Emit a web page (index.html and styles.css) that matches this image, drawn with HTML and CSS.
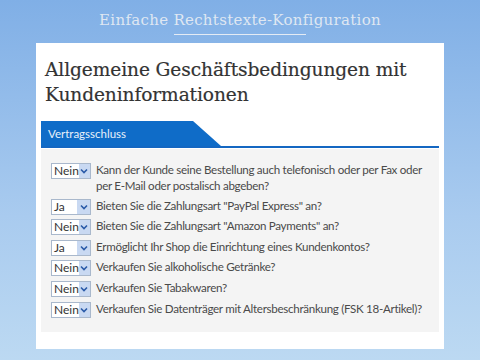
FILE: index.html
```html
<!DOCTYPE html>
<html lang="de">
<head>
<meta charset="utf-8">
<title>Einfache Rechtstexte-Konfiguration</title>
<link rel="stylesheet" href="styles.css">
</head>
<body>
<header class="top">
  <h1 class="site-title">Einfache Rechtstexte-Konfiguration</h1>
</header>
<main class="card">
  <h2 class="heading">Allgemeine Geschäftsbedingungen mit Kundeninformationen</h2>
  <div class="tabbar"><div class="tab">Vertragsschluss</div></div>
  <div class="panel">
    <div class="row"><span class="sel"><span class="val">Nein</span><span class="btn"><svg width="8" height="6" viewBox="0 0 8 6"><path d="M1 1.5 L4 4.5 L7 1.5" fill="none" stroke="#2a5aa8" stroke-width="1.6"/></svg></span></span><span class="q">Kann der Kunde seine Bestellung auch telefonisch oder per Fax oder per E-Mail oder postalisch abgeben?</span></div>
    <div class="row"><span class="sel"><span class="val">Ja</span><span class="btn"><svg width="8" height="6" viewBox="0 0 8 6"><path d="M1 1.5 L4 4.5 L7 1.5" fill="none" stroke="#2a5aa8" stroke-width="1.6"/></svg></span></span><span class="q">Bieten Sie die Zahlungsart "PayPal Express" an?</span></div>
    <div class="row"><span class="sel"><span class="val">Nein</span><span class="btn"><svg width="8" height="6" viewBox="0 0 8 6"><path d="M1 1.5 L4 4.5 L7 1.5" fill="none" stroke="#2a5aa8" stroke-width="1.6"/></svg></span></span><span class="q">Bieten Sie die Zahlungsart "Amazon Payments" an?</span></div>
    <div class="row"><span class="sel"><span class="val">Ja</span><span class="btn"><svg width="8" height="6" viewBox="0 0 8 6"><path d="M1 1.5 L4 4.5 L7 1.5" fill="none" stroke="#2a5aa8" stroke-width="1.6"/></svg></span></span><span class="q">Ermöglicht Ihr Shop die Einrichtung eines Kundenkontos?</span></div>
    <div class="row"><span class="sel"><span class="val">Nein</span><span class="btn"><svg width="8" height="6" viewBox="0 0 8 6"><path d="M1 1.5 L4 4.5 L7 1.5" fill="none" stroke="#2a5aa8" stroke-width="1.6"/></svg></span></span><span class="q">Verkaufen Sie alkoholische Getränke?</span></div>
    <div class="row"><span class="sel"><span class="val">Nein</span><span class="btn"><svg width="8" height="6" viewBox="0 0 8 6"><path d="M1 1.5 L4 4.5 L7 1.5" fill="none" stroke="#2a5aa8" stroke-width="1.6"/></svg></span></span><span class="q">Verkaufen Sie Tabakwaren?</span></div>
    <div class="row"><span class="sel"><span class="val">Nein</span><span class="btn"><svg width="8" height="6" viewBox="0 0 8 6"><path d="M1 1.5 L4 4.5 L7 1.5" fill="none" stroke="#2a5aa8" stroke-width="1.6"/></svg></span></span><span class="q">Verkaufen Sie Datenträger mit Altersbeschränkung (FSK 18-Artikel)?</span></div>
  </div>
</main>
</body>
</html>
```
FILE: styles.css
```css
html, body {
  margin: 0;
  padding: 0;
}
body {
  width: 480px;
  height: 360px;
  overflow: hidden;
  background: linear-gradient(to bottom, #80afe6 0%, #a9cbef 60%, #bcd9f2 100%);
  font-family: Lato, sans-serif;
}
.top {
  height: 43px;
  display: flex;
  justify-content: center;
}
.site-title {
  margin: 9px 0 0 0;
  height: 25px;
  font-family: "DejaVu Serif", serif;
  font-weight: normal;
  font-size: 15px;
  letter-spacing: 0.3px;
  color: #dfe7f2;
  line-height: 22px;
  position: relative;
}
.site-title::after {
  content: "";
  position: absolute;
  left: 75px;
  width: 132px;
  top: 25px;
  height: 1px;
  background: #e4ebf4;
}
.card {
  margin: 0 36px;
  height: 306px;
  background: #fff;
  padding: 14px 5px 0 5px;
  box-sizing: border-box;
}
.heading {
  margin: 0 0 0 4px;
  font-family: "DejaVu Serif", serif;
  font-weight: normal;
  font-size: 18.6px;
  line-height: 25px;
  color: #333;
  letter-spacing: -0.1px;
  -webkit-text-stroke: 0.2px #333;
}
.tabbar {
  margin-top: 14px;
  border-bottom: 2px solid #1467c2;
  height: 25px;
}
.tab {
  width: 180px;
  height: 25px;
  background: #0f6cc8;
  clip-path: polygon(0 0, 152px 0, 180px 100%, 0 100%);
  color: #e8f0fa;
  font-size: 11.5px;
  line-height: 25px;
  padding-left: 7px;
  box-sizing: border-box;
}
.panel {
  background: #f4f4f4;
  height: 183px;
  margin-top: 1px;
  padding: 13px 4px 0 10px;
  box-sizing: border-box;
  display: flex;
  flex-direction: column;
  gap: 3.6px;
}
.row {
  display: flex;
  align-items: flex-start;
  gap: 5px;
  font-size: 11.6px;
  letter-spacing: -0.3px;
  line-height: 16px;
  color: #4a4a4a;
}
.sel {
  flex: none;
  width: 40px;
  height: 16px;
  box-sizing: border-box;
  border: 1px solid #a9b8cc;
  background: #fff;
  display: flex;
  margin-top: 1px;
}
.val {
  flex: 1;
  padding-left: 2px;
  font-size: 12px;
  letter-spacing: 0;
  line-height: 14px;
  color: #333;
}
.btn {
  width: 13px;
  background: #c9d9f2;
  display: flex;
  align-items: center;
  justify-content: center;
}
.q {
  flex: 1;
}
```
